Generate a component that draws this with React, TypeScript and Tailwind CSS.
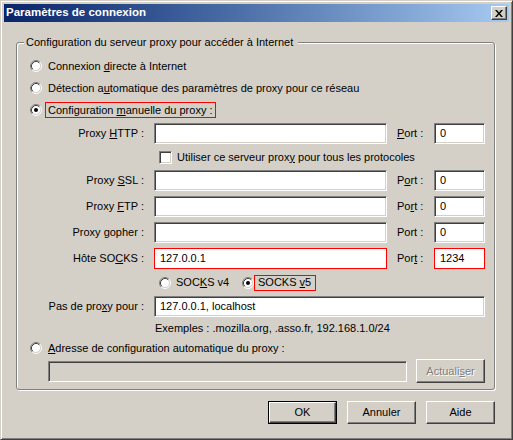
import React from "react";

const font = { fontFamily: '"Liberation Sans", Arial, sans-serif' };

const Radio = ({ checked = false }: { checked?: boolean }) => (
  <svg width="12" height="12" viewBox="0 0 12 12" className="shrink-0">
    <circle cx="6" cy="6" r="4.5" fill="#fff" />
    <path d="M2.11 9.89 A5.5 5.5 0 0 1 9.89 2.11" fill="none" stroke="#808080" />
    <path d="M9.89 2.11 A5.5 5.5 0 0 1 2.11 9.89" fill="none" stroke="#ffffff" />
    <path d="M2.82 9.18 A4.5 4.5 0 0 1 9.18 2.82" fill="none" stroke="#404040" />
    <path d="M9.18 2.82 A4.5 4.5 0 0 1 2.82 9.18" fill="none" stroke="#d4d0c8" />
    {checked && <circle cx="6" cy="6" r="2" fill="#000" />}
  </svg>
);

const Checkbox = () => (
  <div className="w-[13px] h-[13px] shrink-0 bg-white border border-t-[#808080] border-l-[#808080] border-r-white border-b-white shadow-[inset_1px_1px_0_#404040,inset_-1px_-1px_0_#d4d0c8]" />
);

const U = ({ children }: { children: React.ReactNode }) => (
  <span className="underline decoration-1 underline-offset-[1px]">{children}</span>
);

interface FieldProps {
  value?: string;
  width: string;
  red?: boolean;
  disabled?: boolean;
}

const Field = ({ value = "", width, red = false, disabled = false }: FieldProps) => {
  if (red) {
    return (
      <div className={`${width} h-[21px] shrink-0 bg-white border border-[#ff0000] flex items-center pl-[5px]`}>
        {value}
      </div>
    );
  }
  return (
    <div
      className={`${width} h-[21px] shrink-0 ${disabled ? "bg-[#d4d0c8]" : "bg-white"} border border-t-[#808080] border-l-[#808080] border-r-white border-b-white shadow-[inset_1px_1px_0_#404040,inset_-1px_-1px_0_#d4d0c8] flex items-center pl-[5px]`}
    >
      {value}
    </div>
  );
};

interface BtnProps {
  children: React.ReactNode;
  isDefault?: boolean;
  disabled?: boolean;
  className?: string;
}

const Btn = ({ children, isDefault = false, disabled = false, className = "" }: BtnProps) => {
  const face = (
    <div
      className={`w-full h-full flex items-center justify-center border border-t-white border-l-white border-r-[#404040] border-b-[#404040] shadow-[inset_-1px_-1px_0_#808080] ${
        disabled ? "text-[#808080] [text-shadow:1px_1px_0_#fff]" : "text-black"
      }`}
    >
      <span>{children}</span>
    </div>
  );
  return (
    <div className={`${className} shrink-0 bg-[#d4d0c8] ${isDefault ? "border border-black" : ""}`}>{face}</div>
  );
};

const ProxyRow = ({
  label,
  port,
  value = "",
  portValue = "0",
  red = false,
  className = "",
}: {
  label: React.ReactNode;
  port: React.ReactNode;
  value?: string;
  portValue?: string;
  red?: boolean;
  className?: string;
}) => (
  <div className={`flex items-center h-[21px] ${className}`}>
    <div className="w-[137px] pr-[10px] text-right shrink-0">{label}</div>
    <Field width="w-[233px]" value={value} red={red} />
    <div className="w-[47px] pl-[10px] shrink-0">{port}</div>
    <Field width="w-[51px]" value={portValue} red={red} />
  </div>
);

export default function App() {
  return (
    <div
      style={font}
      className="w-[513px] h-[440px] bg-[#d4d0c8] text-[11px] text-black border border-t-[#d4d0c8] border-l-[#d4d0c8] border-r-[#404040] border-b-[#404040] shadow-[inset_1px_1px_0_#fff,inset_-1px_-1px_0_#808080] p-[3px] flex flex-col"
    >
      {/* title bar */}
      <div className="h-[18px] flex items-center justify-between bg-gradient-to-r from-[#0a246a] to-[#a6caf0] pl-[2px] pr-[2px]">
        <span className="text-white font-bold text-[11.5px] leading-none">Paramètres de connexion</span>
        <div className="w-[16px] h-[14px] bg-[#d4d0c8] border border-t-white border-l-white border-r-[#404040] border-b-[#404040] shadow-[inset_-1px_-1px_0_#808080] flex items-center justify-center">
          <svg width="8" height="7" viewBox="0 0 8 7">
            <path d="M0 0h2l2 2.4L6 0h2L5 3.5 8 7H6L4 4.6 2 7H0l3-3.5z" fill="#000" />
          </svg>
        </div>
      </div>

      {/* group box */}
      <fieldset className="mt-[13px] ml-[12px] mr-[14px] border border-[#808080] rounded-[3px] shadow-[1px_1px_0_#fff,inset_1px_1px_0_#fff]">
        <legend className="ml-[7px] pl-[2px] pr-[5px] leading-[14px] bg-[#d4d0c8]">
          Configuration du serveur proxy pour accéder à Internet
        </legend>
        <div className="pt-[6px] pb-[6px] flex flex-col">
          <div className="flex items-center h-[22px] pl-[13px]">
            <Radio />
            <span className="ml-[6px]">
              Connexion <U>d</U>irecte à Internet
            </span>
          </div>
          <div className="flex items-center h-[22px] pl-[13px]">
            <Radio />
            <span className="ml-[6px]">
              Détection a<U>u</U>tomatique des paramètres de proxy pour ce réseau
            </span>
          </div>
          <div className="flex items-center h-[22px] pl-[13px]">
            <Radio checked />
            <div className="ml-[3px] h-[16px] flex items-center border border-[#ff0000] pl-[2px] pr-[2px]">
              <span>
                Configuration <U>m</U>anuelle du proxy :
              </span>
            </div>
          </div>

          <ProxyRow
            className="mt-[2px]"
            label={
              <>
                Proxy <U>H</U>TTP :
              </>
            }
            port={
              <>
                <U>P</U>ort :
              </>
            }
          />
          <div className="flex items-center h-[26px] pl-[142px]">
            <Checkbox />
            <span className="ml-[5px]">
              Utiliser ce serveur prox<U>y</U> pour tous les protocoles
            </span>
          </div>
          <ProxyRow
            label={
              <>
                Proxy <U>S</U>SL :
              </>
            }
            port={
              <>
                P<U>o</U>rt :
              </>
            }
          />
          <ProxyRow
            className="mt-[5px]"
            label={
              <>
                Proxy <U>F</U>TP :
              </>
            }
            port={
              <>
                Po<U>r</U>t :
              </>
            }
          />
          <ProxyRow className="mt-[5px]" label="Proxy gopher :" port="Port :" />
          <ProxyRow
            className="mt-[5px]"
            red
            value="127.0.0.1"
            portValue="1234"
            label={
              <>
                Hôte SO<U>C</U>KS :
              </>
            }
            port={
              <>
                Por<U>t</U> :
              </>
            }
          />

          <div className="flex items-center h-[27px] pl-[142px]">
            <div className="w-[83px] flex items-center shrink-0">
              <Radio />
              <span className="ml-[5px]">
                SOC<U>K</U>S v4
              </span>
            </div>
            <Radio checked />
            <div className="h-[16px] flex items-center border border-[#ff0000] pl-[3px] pr-[4px]">
              <span>
                SOCKS <U>v</U>5
              </span>
            </div>
          </div>

          <div className="flex items-center h-[21px]">
            <div className="w-[137px] pr-[10px] text-right shrink-0">
              Pas de pro<U>x</U>y pour :
            </div>
            <Field width="w-[331px]" value="127.0.0.1, localhost" />
          </div>

          <div className="flex items-center h-[22px] pl-[138px]">
            Exemples : .mozilla.org, .asso.fr, 192.168.1.0/24
          </div>

          <div className="flex items-center h-[18px] pl-[13px]">
            <Radio />
            <span className="ml-[6px]">
              <U>A</U>dresse de configuration automatique du proxy :
            </span>
          </div>

          <div className="flex items-center h-[24px] mt-[2px] pl-[31px]">
            <Field width="w-[359px]" disabled />
            <Btn disabled className="ml-[9px] w-[69px] h-[24px]">
              Actuali<U>s</U>er
            </Btn>
          </div>
        </div>
      </fieldset>

      {/* dialog buttons */}
      <div className="mt-[11px] flex justify-end gap-[10px] pr-[14px]">
        <Btn isDefault className="w-[69px] h-[23px]">
          OK
        </Btn>
        <Btn className="w-[69px] h-[23px]">Annuler</Btn>
        <Btn className="w-[69px] h-[23px]">Aide</Btn>
      </div>
    </div>
  );
}
